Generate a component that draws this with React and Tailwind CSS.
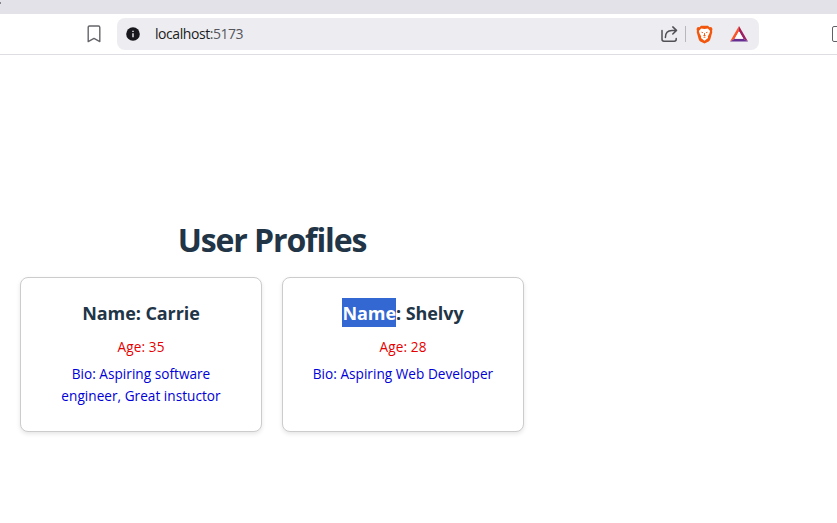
import React from "react";

function Toolbar() {
  return (
    <header>
      <div className="h-[14px] bg-[#e3e2e8] overflow-hidden">
        <div className="h-[2px] w-[1px] mt-[2px] bg-[#85858b]" />
      </div>
      <div className="flex h-[41px] items-center border-b border-[#dedde2] bg-white">
        <svg className="ml-[87px] h-[18px] w-[14px] shrink-0" viewBox="0 0 14 18" fill="none" stroke="#65656b" strokeWidth="1.4" strokeLinejoin="round">
          <path d="M1.2 2.4Q1.2 1 2.6 1h8.8q1.4 0 1.4 1.4v14.2L7 13.4l-5.8 3.2z" />
        </svg>
        <div className="ml-4 flex h-8 w-[642px] shrink-0 items-center rounded-lg bg-[#ededf1]">
          <svg className="ml-[9px] h-[14px] w-[14px]" viewBox="0 0 14 14">
            <circle cx="7" cy="7" r="6.8" fill="#17171d" />
            <path d="M7 6.3v4M7 3.7v1.3" stroke="#ededf1" strokeWidth="1.4" />
          </svg>
          <span className="-mt-px ml-[15px] whitespace-nowrap text-[14px] tracking-[-0.44px] text-[#55555c]">
            <span className="text-[#1b1b21]">localhost</span>:5173
          </span>
          <svg className="ml-auto h-[18px] w-[18px]" viewBox="0 0 18 18" fill="none" stroke="#505056" strokeWidth="1.5" strokeLinecap="round" strokeLinejoin="round">
            <path d="M1 5.6v8.7q0 1.9 1.9 1.9h10.4q1.9 0 1.9-1.9v-.8" />
            <path d="M4.4 12.4c0-4.4 2.4-7 6.5-7h4M11.8 1.9l3.7 3.5L11.8 9" />
          </svg>
          <div className="ml-[6px] h-4 w-px bg-[#b7b7be]" />
          <svg className="ml-[10px] h-[19px] w-[17px]" viewBox="0 0 17 20" preserveAspectRatio="none">
            <path d="M5 .9h7l1.5 1.5 1.8-.2 1.2 2-.5 2 .3 1.1-2 7.8q-.4 1.4-1.6 2.2L8.5 19.6l-4.2-2.3q-1.2-.8-1.6-2.2L.7 7.3 1 6.2l-.5-2 1.2-2 1.8.2z" fill="#f2570d" />
            <path d="M5.2 3.7 8.5 4.3l3.3-.6 2.3 2.5-.6 2.6-1.7 3.2.2 1.7-3.5 2.8-3.5-2.8.2-1.7-1.7-3.2-.6-2.6z" fill="#fff" />
            <path d="m4.9 7.2 2.3.5-.7.9zm7.2 0-2.3.5.7.9zM8.1 8.3h.8l.1 2.2 1 .7-1.5.9-1.5-.9 1-.7zM6.8 13h3.4l-1.7.7z" fill="#f2570d" />
          </svg>
          <svg className="ml-4 mr-[10px] h-[18px] w-[20px]" viewBox="0 0 20 18">
            <path d="M10 1 1 16.5l4.7-2.7L10 6.3z" fill="#fb542b" />
            <path d="M10 1v5.3l4.3 7.5 4.7 2.7z" fill="#9e1f63" />
            <path d="M1 16.5h18l-4.7-2.7H5.7z" fill="#662d91" />
            <path d="m10 6.3 4.3 7.5H5.7z" fill="#fff" />
          </svg>
        </div>
        <div className="ml-auto w-[5px] shrink-0 overflow-hidden">
          <div className="h-4 w-4 rounded-[2px] border-[1.5px] border-[#606066]" />
        </div>
      </div>
    </header>
  );
}

function Card({ name, age, bio, selected }) {
  return (
    <article className="h-[155px] w-[242px] rounded-lg border border-[#cccccc] bg-white px-5 pt-5 text-center shadow-[0_2px_4px_rgba(0,0,0,0.1)]">
      <h2 className="flex h-[29px] justify-center whitespace-pre text-[18px] font-bold leading-[27px] tracking-[-0.07px] text-[#213547]">
        <span className={selected ? "bg-[#3367d1] pt-[2px] text-white" : "pt-[2px]"}>Name</span>
        <span className="pt-[2px]">{`: ${name}`}</span>
      </h2>
      <p className="mt-[9px] text-[13.6px] leading-[22px] tracking-[0.12px] text-[#e60000]">{`Age: ${age}`}</p>
      <p className="mt-[5px] px-2 text-[13.6px] leading-[22px] tracking-[0.03px] text-[#0000d8]">{`Bio: ${bio}`}</p>
    </article>
  );
}

export default function App() {
  return (
    <div className="h-[523px] w-[837px] overflow-hidden bg-white font-['Open_Sans',sans-serif]">
      <Toolbar />
      <main className="w-[544px] px-5 pt-[163px]">
        <h1 className="text-center text-[32px] font-bold leading-[44px] tracking-[-1.1px] text-[#213547]">User Profiles</h1>
        <section className="mt-[15px] flex gap-5">
          <Card name="Carrie" age={35} bio="Aspiring software engineer, Great instuctor" />
          <Card name="Shelvy" age={28} bio="Aspiring Web Developer" selected />
        </section>
      </main>
    </div>
  );
}
